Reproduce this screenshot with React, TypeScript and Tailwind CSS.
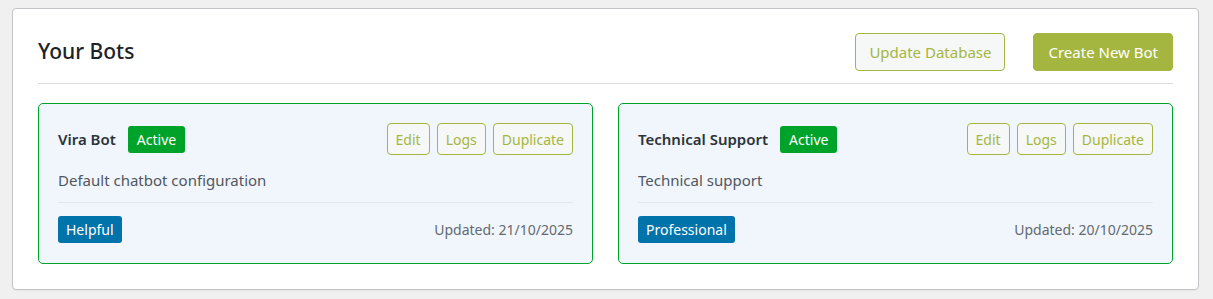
const BOTS = [
  {
    name: "Vira Bot",
    description: "Default chatbot configuration",
    tone: "Helpful",
    updated: "21/10/2025",
  },
  {
    name: "Technical Support",
    description: "Technical support",
    tone: "Professional",
    updated: "20/10/2025",
  },
];

function SmallButton({ label }: { label: string }) {
  return (
    <button
      type="button"
      className="h-[32px] rounded-[4px] border border-[#a4b63f] bg-[#f6f7f7] px-[8px] text-[14px] text-[#a4b63f]"
    >
      {label}
    </button>
  );
}

function BotCard({
  name,
  description,
  tone,
  updated,
}: (typeof BOTS)[number]) {
  return (
    <div className="flex flex-col rounded-[5px] border border-[#00a32a] bg-[#f0f6fc] px-[19px] pt-[19px] pb-[20px]">
      <div className="flex items-center justify-between">
        <div className="flex items-center gap-[12px]">
          <span className="text-[15px] font-semibold text-[#2c3338]">
            {name}
          </span>
          <span className="rounded-[3px] bg-[#00a32a] px-[9px] py-[3px] text-[14px] leading-[21px] text-white">
            Active
          </span>
        </div>
        <div className="flex gap-[7px]">
          <SmallButton label="Edit" />
          <SmallButton label="Logs" />
          <SmallButton label="Duplicate" />
        </div>
      </div>
      <p className="mt-[13px] text-[15px] leading-[24px] text-[#50575e]">
        {description}
      </p>
      <div className="mt-[10px] border-t border-[#e4e8ec] pt-[13px]">
        <div className="flex items-center justify-between">
          <span className="rounded-[3px] bg-[#0073aa] px-[8px] py-[2px] text-[14px] leading-[23px] text-white">
            {tone}
          </span>
          <span className="text-[14px] text-[#646970]">Updated: {updated}</span>
        </div>
      </div>
    </div>
  );
}

export default function App() {
  return (
    <div
      className="min-h-[299px] bg-[#f0f0f1] px-[12px] pt-[8px] pb-[8px]"
      style={{ fontFamily: '"Noto Sans", "Open Sans", sans-serif' }}
    >
      <div className="w-[1187px] rounded-[4px] border border-[#c3c4c7] bg-white px-[25px] pt-[24px] pb-[25px] shadow-[0_1px_1px_rgba(0,0,0,0.04)]">
        {/* Header */}
        <div className="flex items-center justify-between border-b border-[#dcdcde] pb-[12px]">
          <h2 className="text-[21px] font-medium text-[#1d2327]">Your Bots</h2>
          <div className="flex gap-[28px]">
            <button
              type="button"
              className="h-[38px] rounded-[4px] border border-[#a4b63f] bg-[#f6f7f7] px-[13px] text-[15px] text-[#a4b63f]"
            >
              Update Database
            </button>
            <button
              type="button"
              className="h-[38px] rounded-[4px] border border-[#a4b63f] bg-[#a4b63f] px-[14px] text-[15px] text-white"
            >
              Create New Bot
            </button>
          </div>
        </div>

        {/* Cards */}
        <div className="mt-[19px] grid grid-cols-2 gap-[25px]">
          {BOTS.map((bot) => (
            <BotCard key={bot.name} {...bot} />
          ))}
        </div>
      </div>
    </div>
  );
}
